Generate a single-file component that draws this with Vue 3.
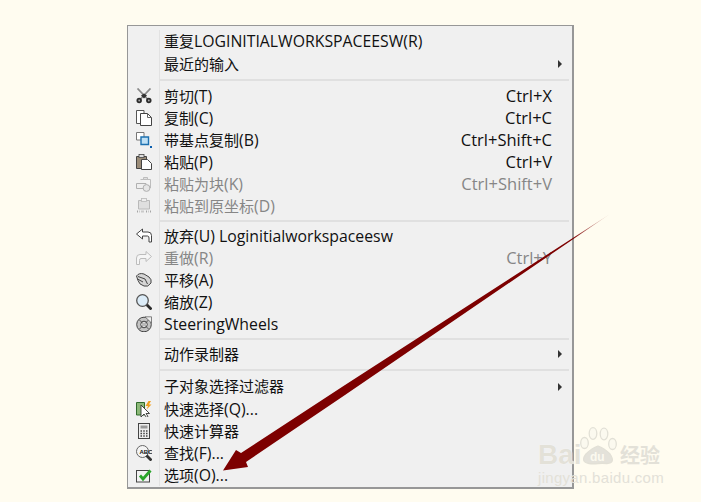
<script setup>
const ic = {
  cut: '<path d="M1.500 .5 11.500 11M14.500 .5 4.500 11" stroke="#8a8a8a" stroke-width="1.800" fill="none"/><path d="M5 7.500 8 10.500 11 7.500 8 5.500Z" fill="#333"/><circle cx="3.200" cy="12.500" r="2.700" fill="#2b2b2b"/><circle cx="12.800" cy="12.500" r="2.700" fill="#2b2b2b"/><circle cx="3.200" cy="12.500" r=".9" fill="#aaa"/><circle cx="12.800" cy="12.500" r=".9" fill="#aaa"/>',
  copy: '<path d="M.5 .5H8V13.500H.5Z" fill="#fff" stroke="#555"/><path d="M4.500 3.500H11.500L15.500 7.500V15.500H4.500Z" fill="#fff" stroke="#444"/><path d="M11.500 3.500V7.500H15.500" fill="none" stroke="#666"/>',
  base: '<path d="M.5 .5H8V8H.5Z" fill="#fff" stroke="#777"/><path d="M5 5H12.500V12.500H5Z" fill="#bfe0f5" stroke="#1c70b0" stroke-width="1.400"/><rect x="14" y="14" width="2" height="2" fill="#0b5fb0"/>',
  paste: '<path d="M.5 2.500H10.500V14.500H.5Z" fill="#9b8c78" stroke="#444"/><rect x="3" y=".5" width="5" height="3" fill="#ddd" stroke="#444" stroke-width=".8"/><path d="M5.500 5.500H11.500L15.500 9.500V15.500H5.500Z" fill="#fff" stroke="#444"/>',
  pasteblock: '<path d="M4.500 3.500H14.500V12" fill="#f4f4f4" stroke="#b5b5b5"/><path d="M7.500 1.500H11.500V3.500H7.500Z" fill="#ddd" stroke="#b5b5b5"/><path d="M.5 7.500H10V12.500H.5Z" fill="#eee" stroke="#a5a5a5"/><circle cx="10.500" cy="12" r="3.400" fill="#e5e5e5" stroke="#a5a5a5"/>',
  pastexy: '<path d="M2.500 2.500H13.500V11H2.500Z" fill="#ddd" stroke="#b0b0b0"/><rect x="5.500" y=".5" width="5" height="3" fill="#eee" stroke="#b0b0b0" stroke-width=".8"/><path d="M1 13.500h2.500M5.500 13.500h2.500M10 13.500h2.500M14 13.500h1.500" stroke="#999" stroke-width="2" stroke-dasharray="1 1"/>',
  undo: '<path d="M6.500 1 .5 6 6.500 11V8H11.500Q13 8 13 10V14H15.500V7.500Q15.500 4 12 4H6.500Z" fill="#fff" stroke="#444"/>',
  redo: '<path d="M10 1.500 15.500 6.500 10 11.500V8.500H5Q3.500 8.500 3.500 10.500V14.500H.5V8Q.5 4.500 4 4.500H10Z" fill="#f8f8f8" stroke="#b5b5b5"/>',
  pan: '<path d="M.5 4Q3 .5 8 2L13 5Q16 7.500 15 11Q12 15.500 8 14Q3 12.500 2 8.500Z" fill="#d5d5d5" stroke="#444"/><path d="M2 4.500 9 7 11.500 12M1.500 7 7 10" stroke="#444" fill="none"/>',
  zoom: '<circle cx="6.500" cy="6.500" r="5.800" fill="#dcecf8" stroke="#555" stroke-width="1.300"/><path d="M10.800 10.800 15.500 15.500" stroke="#2b2b2b" stroke-width="2.800"/>',
  wheel: '<circle cx="8" cy="8.500" r="7.300" fill="#c4c4c4" stroke="#444"/><circle cx="8" cy="8.500" r="3.300" fill="#eee" stroke="#444"/><path d="M3.500 4 12.500 13M12.500 4 3.500 13" stroke="#555"/><path d="M9 .8H15.500V7Z" fill="#eee" stroke="#666" stroke-width=".8"/><circle cx="8" cy="8.500" r="2" fill="#bbb"/>',
  quick: '<path d="M.5 1.500H8.500V14H.5Z" fill="#8cb878" stroke="#2f6a2a"/><path d="M5 4V16L8 13 10.500 16.500 12 15.500 10 12.500H13.500Z" fill="#fff" stroke="#333" stroke-width=".9"/><path d="M12.500 0 9.500 5H12L10.500 8.500 15.500 3.500H13L15 0Z" fill="#f0a020"/>',
  calc: '<rect x="2.500" y=".5" width="11" height="15" fill="#eee" stroke="#444"/><rect x="4.500" y="2.500" width="7" height="3" fill="#999"/><path d="M4.500 8h7M4.500 10.500h7M4.500 13h7" stroke="#444" stroke-width="1.300" stroke-dasharray="1.500 1.250"/>',
  find: '<circle cx="6.500" cy="6.500" r="6" fill="#f4f4f4" stroke="#666"/><path d="M10.500 10.500 15.500 15.500" stroke="#333" stroke-width="2.800"/><text x="3.500" y="8.500" font-family="Liberation Sans" font-size="6" font-weight="700" fill="#111">ABC</text>',
  opt: '<rect x=".5" y="3.500" width="13" height="11.500" fill="#f2f2f2" stroke="#444"/><path d="M4 8.500 7 12 14.500 3.500" stroke="#2aa52a" stroke-width="2.800" fill="none"/>'
}
const groups = [
  { rows: [
    { t: '重复LOGINITIALWORKSPACEESW(R)', tall: true },
    { t: '最近的输入', sub: true }
  ]},
  { sep: 10, rows: [
    { t: '剪切(T)', k: 'Ctrl+X', i: 'cut' },
    { t: '复制(C)', k: 'Ctrl+C', i: 'copy' },
    { t: '带基点复制(B)', k: 'Ctrl+Shift+C', i: 'base' },
    { t: '粘贴(P)', k: 'Ctrl+V', i: 'paste' },
    { t: '粘贴为块(K)', k: 'Ctrl+Shift+V', i: 'pasteblock', off: true },
    { t: '粘贴到原坐标(D)', i: 'pastexy', off: true }
  ]},
  { sep: 8, rows: [
    { t: '放弃(U) Loginitialworkspaceesw', i: 'undo' },
    { t: '重做(R)', k: 'Ctrl+Y', i: 'redo', off: true },
    { t: '平移(A)', i: 'pan' },
    { t: '缩放(Z)', i: 'zoom' },
    { t: 'SteeringWheels', i: 'wheel' }
  ]},
  { sep: 8, rows: [{ t: '动作录制器', sub: true }] },
  { sep: 10, rows: [
    { t: '子对象选择过滤器', sub: true, tall: true },
    { t: '快速选择(Q)...', i: 'quick' },
    { t: '快速计算器', i: 'calc' },
    { t: '查找(F)...', i: 'find' },
    { t: '选项(O)...', i: 'opt' }
  ]}
]
const parts = (t) => t.match(/[\u4e00-\u9fff]+|[^\u4e00-\u9fff]+/g).map((s) => ({ s, cjk: /[\u4e00-\u9fff]/.test(s) }))
</script>

<template>
  <div class="page">
    <div class="menu">
      <div v-for="(g, gi) in groups" :key="gi" class="group">
        <div v-if="g.sep" class="sep" :class="g.sep === 8 ? 'sep-s' : 'sep-l'"><span class="gutter"></span><span class="line"></span></div>
        <div v-for="r in g.rows" :key="r.t" class="row" :class="{ off: r.off, tall: r.tall }">
          <span class="gutter"><svg v-if="r.i" class="icon" viewBox="0 0 16 16" v-html="ic[r.i]"></svg></span>
          <span class="label"><span v-for="(p, n) in parts(r.t)" :key="n" :class="{ cjk: p.cjk }">{{ p.s }}</span></span>
          <span v-if="r.k" class="key">{{ r.k }}</span>
          <span v-if="r.sub" class="caret"></span>
        </div>
      </div>
    </div>
    <div class="mark">
      <svg class="paw" viewBox="0 0 38 40" width="38" height="40">
        <g fill="#fbf9ef" stroke="#e2e0d6" stroke-width="1.300">
          <ellipse cx="4.500" cy="16" rx="3.800" ry="5.500"/>
          <ellipse cx="13" cy="6.500" rx="3.800" ry="5.800"/>
          <ellipse cx="24" cy="7" rx="3.800" ry="5.800"/>
          <ellipse cx="32.500" cy="17" rx="3.800" ry="5.500"/>
          <path d="M18 19Q24 21 30 27 36 36 27 36.500 22 36 18 36.500 13 37 9 36.500 0 35 6 27 12 21 18 19Z" fill="#e4e2da"/>
        </g>
        <text x="10" y="34" class="du">du</text>
      </svg>
      <span class="bai">Bai</span>
      <span class="cn">经验</span>
      <span class="url">jingyan.baidu.com</span>
    </div>
    <svg class="arrow" viewBox="0 0 701 502" width="701" height="502">
      <defs>
        <linearGradient id="fade" gradientUnits="userSpaceOnUse" x1="610" y1="214" x2="572" y2="239">
          <stop offset="0" stop-color="#8b1a1a" stop-opacity=".12"/>
          <stop offset="1" stop-color="#7d0000"/>
        </linearGradient>
      </defs>
      <path d="M610 214 345 385 241 453 236 450 223 470.500 248 467 246 462 345 395Z" fill="url(#fade)"/>
    </svg>
  </div>
</template>

<style scoped>
.page {
  position: relative;
  width: 701px;
  height: 502px;
  overflow: hidden;
  background: #fffcf0;
  padding: 25px 0 0 127px;
  box-sizing: border-box;
  font-family: "Open Sans", "Noto Sans CJK SC", sans-serif;
}
.menu {
  width: 447px;
  height: 464px;
  box-sizing: border-box;
  border: 1px solid #979797;
  border-width: 1px 2px 2px 1px;
  background: #f0f0f0;
  padding: 4px 0 2px;
}
.group { display: flex; flex-direction: column; }
.row {
  display: flex;
  align-items: center;
  height: 22px;
  font-size: 15.8px;
  color: #111;
}
.row.tall { height: 23px; }
.tall .label { padding-bottom: 2px; }
.row.off { color: #868686; }
.cjk { font-size: 15px; }
.gutter {
  flex: none;
  width: 31px;
  height: 100%;
  border-right: 1px solid #e2e2e2;
  display: flex;
  align-items: center;
  justify-content: center;
}
.off .icon { opacity: 0.85; }
.icon { width: 16px; height: 16px; }
.label { flex: 1; padding-left: 4px; white-space: nowrap; }
.key { padding: 0 20px 2px 0; white-space: nowrap; font-size: 16.5px; }
.caret {
  width: 0;
  height: 0;
  margin-right: 10px;
  border-left: 4px solid #333;
  border-top: 4px solid transparent;
  border-bottom: 4px solid transparent;
}
.sep { display: flex; align-items: center; }
.sep-l { height: 10px; }
.sep-s { height: 8px; }
.line { flex: 1; height: 2px; margin-right: 3px; background: #e0e0e0; }
.arrow { position: absolute; left: 0; top: 0; }
.mark {
  position: absolute;
  left: 538px;
  top: 425px;
  width: 125px;
  height: 64px;
  color: #e3e1d8;
}
.paw { position: absolute; left: 42px; top: 2px; }
.du { font: 700 12px "Liberation Sans", sans-serif; fill: #fbf9ef; }
.bai { position: absolute; left: 0; top: 12px; font: 700 28px/36px "Liberation Sans", sans-serif; text-shadow: 0 0 1px #fff; }
.cn { position: absolute; left: 82px; top: 17px; font: 700 20px/26px "Noto Sans CJK SC", sans-serif; }
.url { position: absolute; left: 0; top: 44px; font: 15px/18px "Liberation Sans", sans-serif; letter-spacing: 0.3px; }
</style>

<style>
html, body { margin: 0; }
</style>
